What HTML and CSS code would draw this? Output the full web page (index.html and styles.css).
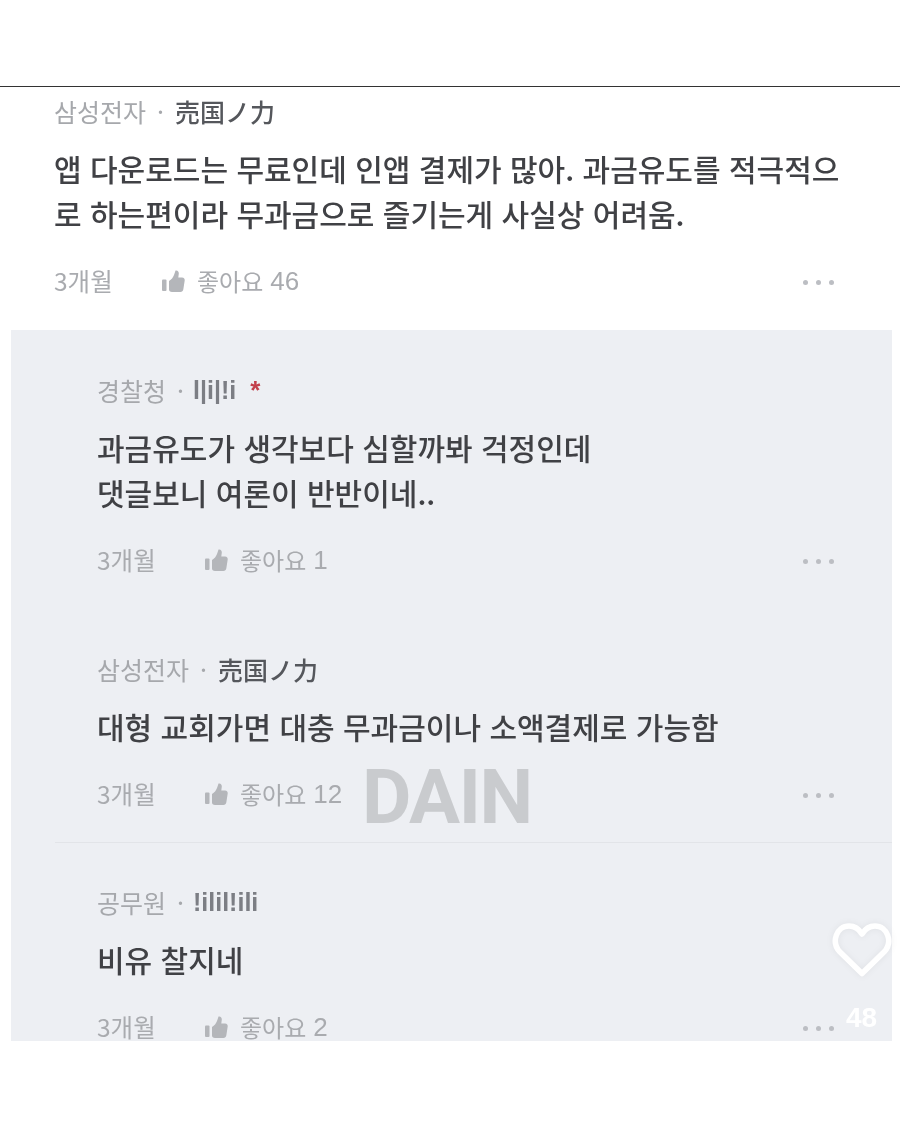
FILE: index.html
```html
<!DOCTYPE HTML>
<html lang="ko">
<head>
    <title>Comments</title>
    <link rel="stylesheet" href="styles.css">
</head>
<body>
<svg class="icon_defs" width="0" height="0">
    <symbol id="thumb" viewBox="0 0 23 22">
        <rect x="0" y="9.500" width="4.500" height="11.500" rx="1"></rect>
        <path d="M7 11 C9.500 9.500 11 7.500 12 5 C12.600 3.500 13 2 13.500 0.500 C15.500 0 17 1.500 16.800 3.500 L16.300 7.500 L20 7.500 C22 7.500 23 9 22.700 10.500 L21.300 19.500 C21 21 20 22 18.500 22 L10 22 C8 22 7 21 7 19.500 Z"></path>
    </symbol>
</svg>
<div class="page">
    <div class="top_line"></div>
    <section class="comment first">
        <div class="name_row"><span class="name">삼성전자</span><span class="dot">·</span><span class="nick" lang="ja">売国ノ力</span></div>
        <p class="text">앱 다운로드는 무료인데 인앱 결제가 많아. 과금유도를 적극적으<br>로 하는편이라 무과금으로 즐기는게 사실상 어려움.</p>
        <div class="meta">
            <span class="date">3개월</span>
            <span class="like"><svg class="thumb"><use href="#thumb"></use></svg>좋아요 <b class="count">46</b></span>
            <span class="more"><i></i><i></i><i></i></span>
        </div>
    </section>
    <section class="replies">
        <div class="comment reply_one">
            <div class="name_row"><span class="name">경찰청</span><span class="dot">·</span><span class="nick thin">l|i|!i</span><span class="star">*</span></div>
            <p class="text">과금유도가 생각보다 심할까봐 걱정인데<br>댓글보니 여론이 반반이네..</p>
            <div class="meta">
                <span class="date">3개월</span>
                <span class="like"><svg class="thumb"><use href="#thumb"></use></svg>좋아요 <b class="count">1</b></span>
                <span class="more"><i></i><i></i><i></i></span>
            </div>
        </div>
        <div class="comment reply_two">
            <div class="name_row"><span class="name">삼성전자</span><span class="dot">·</span><span class="nick" lang="ja">売国ノ力</span></div>
            <p class="text">대형 교회가면 대충 무과금이나 소액결제로 가능함</p>
            <div class="meta">
                <span class="date">3개월</span>
                <span class="like"><svg class="thumb"><use href="#thumb"></use></svg>좋아요 <b class="count">12</b></span>
                <span class="more"><i></i><i></i><i></i></span>
            </div>
        </div>
        <div class="divider"></div>
        <div class="comment reply_three">
            <div class="name_row"><span class="name">공무원</span><span class="dot">·</span><span class="nick thin">!ilil!ili</span></div>
            <p class="text">비유 찰지네</p>
            <div class="meta">
                <span class="date">3개월</span>
                <span class="like"><svg class="thumb"><use href="#thumb"></use></svg>좋아요 <b class="count">2</b></span>
                <span class="more"><i></i><i></i><i></i></span>
            </div>
        </div>
    </section>
    <div class="watermark">DAIN</div>
    <svg class="heart" viewBox="0 0 60 54">
        <path d="M30 50.500 L7.500 28.500 C-1 19 4.500 3 17 3 C23 3 27 6 30 11 C33 6 37 3 43 3 C55.500 3 61 19 52.500 28.500 Z"></path>
    </svg>
    <div class="like_count">48</div>
</div>
</body>
</html>
```

FILE: styles.css
```css
body {
    margin: 0;
    background-color: #fff;
}

.icon_defs {
    position: absolute;
}

.page {
    position: relative;
    height: 1125px;
    overflow: hidden;
    font-family: "Noto Sans CJK KR", "Noto Sans", sans-serif;
    filter: blur(0.4px);
}

.top_line {
    height: 86px;
    border-bottom: 1px solid #333;
}

.comment {
    padding-right: 58px;
}

.first {
    height: 243px;
    padding-left: 54px;
}

.name_row {
    display: flex;
    align-items: center;
    height: 48px;
    font-size: 25px;
}

.name {
    color: #a6a8ac;
}

.dot {
    margin: 0 11px;
    color: #a6a8ac;
}

.nick {
    font-weight: 500;
    color: #55575c;
}

.nick.thin {
    margin-left: -2px;
    font-family: "Liberation Sans", sans-serif;
    font-weight: 700;
    color: #7c7e84;
}

.star {
    margin-left: 14px;
    font-family: "Liberation Sans", sans-serif;
    font-weight: 700;
    font-size: 26px;
    color: #c2404c;
}

.text {
    margin: 11px 0 0;
    font-size: 30px;
    font-weight: 500;
    line-height: 45px;
    color: #404145;
    white-space: nowrap;
}

.meta {
    display: flex;
    align-items: center;
    height: 26px;
    margin-top: 32px;
    font-size: 24px;
    line-height: 26px;
    color: #a9abaf;
}

.date {
    width: 108px;
    font-size: 24.500px;
}

.like {
    display: flex;
    align-items: center;
    gap: 0 7px;
}

.thumb {
    width: 23px;
    height: 22px;
    margin-right: 5px;
    fill: #b4b6ba;
}

.count {
    font-family: "Liberation Sans", sans-serif;
    font-weight: 400;
    font-size: 26px;
}

.more {
    display: flex;
    gap: 8px;
    margin: 2px 8px 0 auto;
}

.more i {
    width: 5px;
    height: 5px;
    border-radius: 50%;
    background-color: #bcbec3;
}

.replies {
    margin: 0 8px 0 11px;
    height: 711px;
    background-color: #edeff3;
}

.replies .comment {
    padding-left: 86px;
    padding-right: 50px;
}

.reply_one {
    padding-top: 36px;
    height: 279px;
    box-sizing: border-box;
}

.reply_two {
    height: 233px;
    padding-top: 36px;
    box-sizing: border-box;
}

.divider {
    height: 1px;
    margin-left: 44px;
    background-color: #e2e4e8;
}

.reply_three {
    padding-top: 35px;
}

.watermark {
    position: absolute;
    left: 362px;
    top: 753px;
    font-family: Roboto, sans-serif;
    font-weight: 700;
    font-size: 76px;
    line-height: 88px;
    letter-spacing: -1.500px;
    color: #c9cbce;
}

.heart {
    position: absolute;
    left: 832px;
    top: 923px;
    width: 60px;
    height: 54px;
    overflow: visible;
    fill: none;
    stroke: #fff;
    stroke-width: 5.500;
    stroke-linejoin: round;
    filter: drop-shadow(0 0 3px rgba(0, 0, 0, .06));
}

.like_count {
    position: absolute;
    left: 846px;
    top: 1002px;
    font-family: "Liberation Sans", sans-serif;
    font-weight: 700;
    font-size: 28px;
    line-height: 32px;
    color: #fff;
}
```
